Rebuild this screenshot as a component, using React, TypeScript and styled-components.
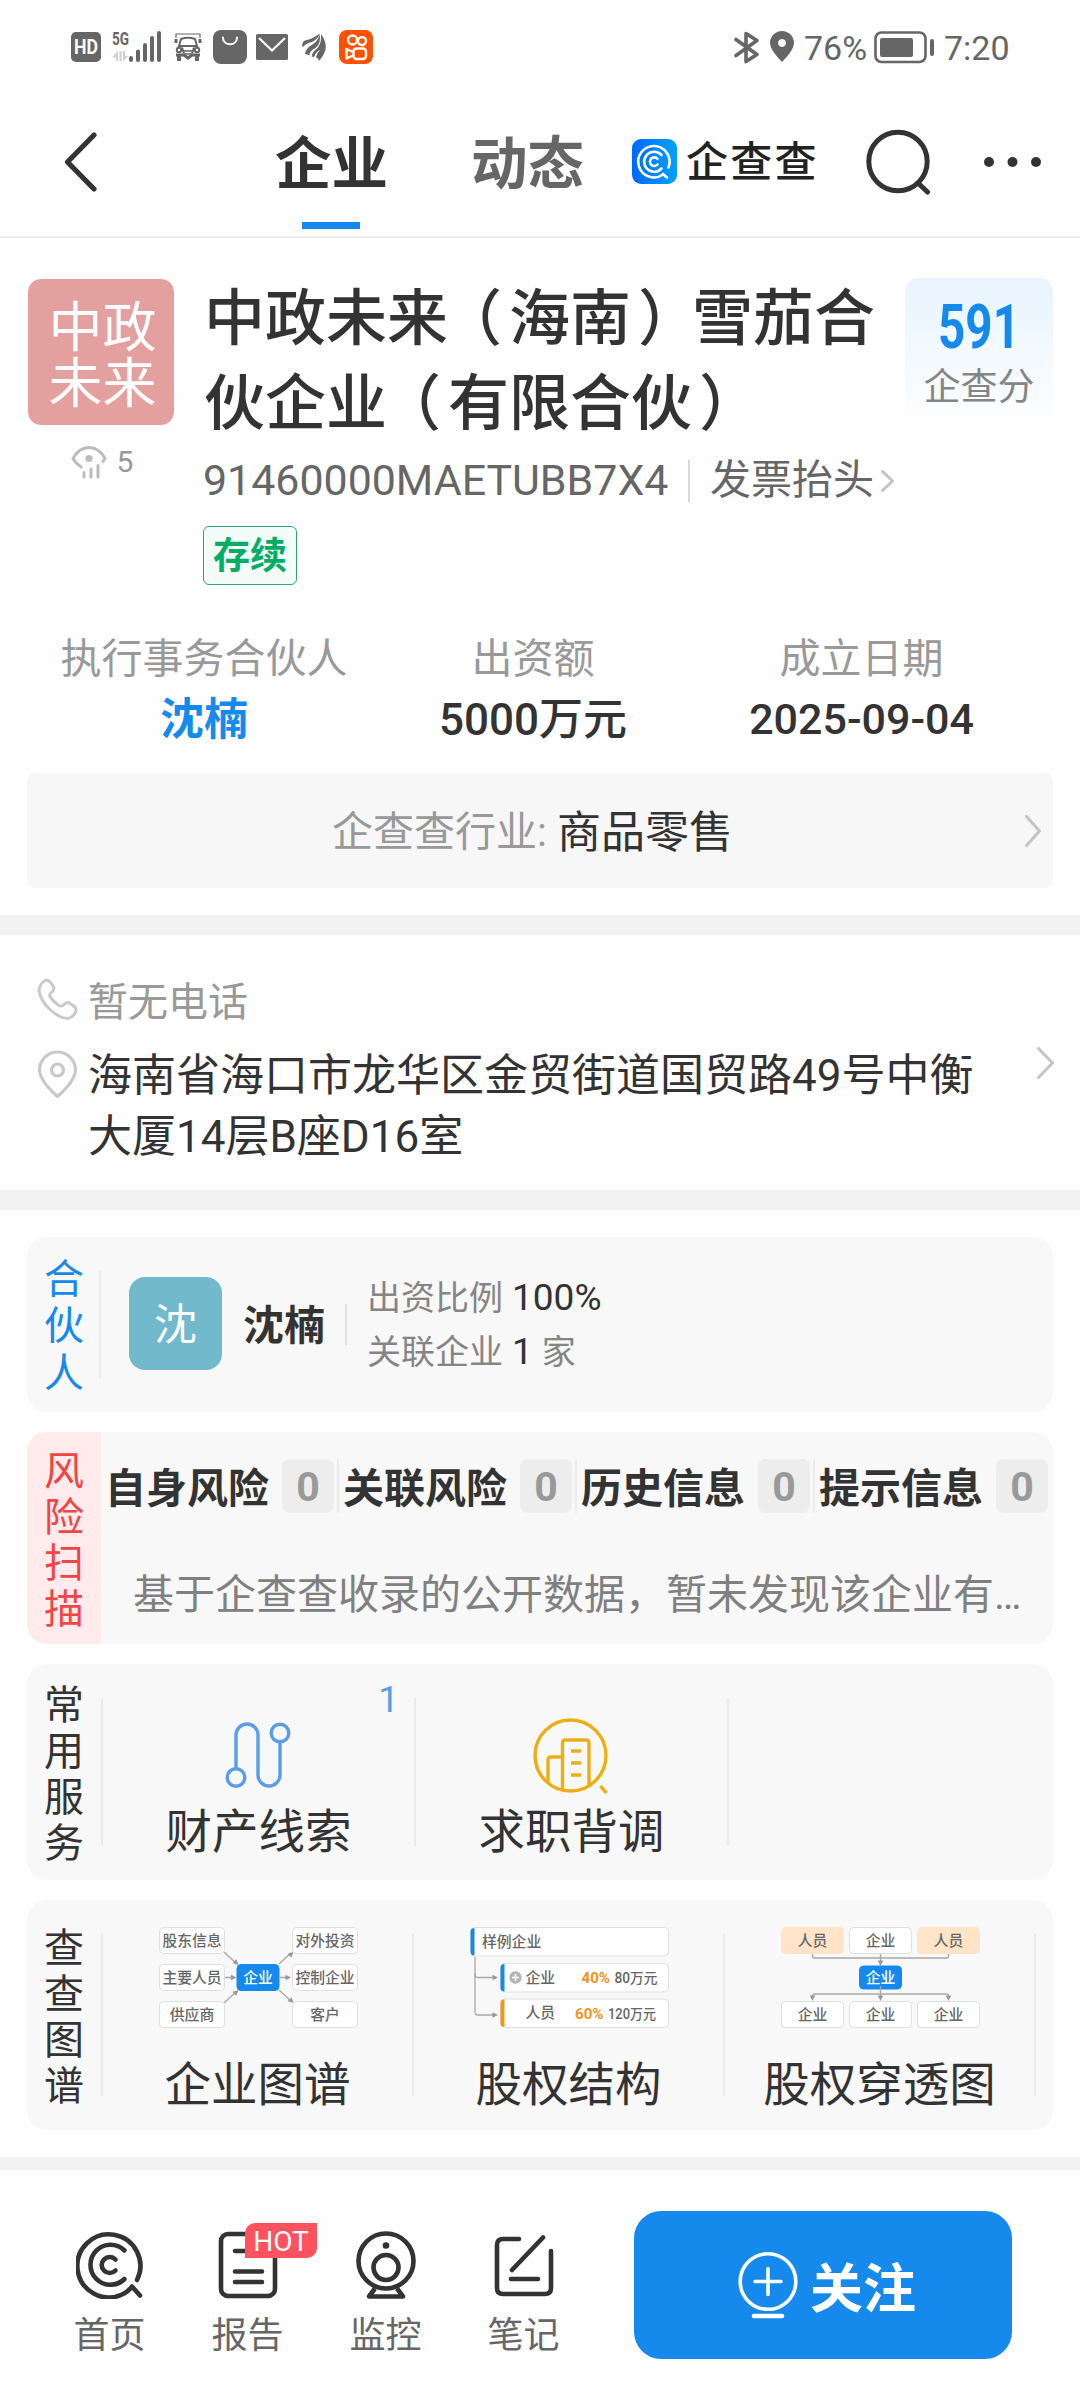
import React from "react";
import styled, { createGlobalStyle } from "styled-components";

const BLUE = "#168aec";
const INK = "#333333";

const GlobalStyle = createGlobalStyle`
  * { box-sizing: border-box; }
  body {
    margin: 0;
    background: #ffffff;
    font-family: Roboto, "Noto Sans CJK SC", sans-serif;
    color: ${INK};
  }
  svg { display: block; flex: none; }
`;

const Page = styled.main`
  width: 1080px;
  height: 2400px;
  overflow: hidden;
  display: flex;
  flex-direction: column;
  background: #fefefe;
`;

/* ---------- status bar ---------- */
const StatusBar = styled.div`
  height: 94px;
  padding: 0 72px 0 71px;
  display: flex;
  align-items: center;
  justify-content: space-between;
  color: #666;
`;
const StatusGroup = styled.div<{ $gap: number }>`
  display: flex;
  align-items: center;
  gap: ${(p) => p.$gap}px;
`;
const StatusText = styled.span<{ $w: number }>`
  width: ${(p) => p.$w}px;
  font-size: 34px;
  line-height: 40px;
  padding-top: 1px;
  white-space: nowrap;
`;

/* ---------- header ---------- */
const Header = styled.header`
  height: 144px;
  padding: 0 39px 7px 64px;
  display: flex;
  align-items: center;
  border-bottom: 2px solid #ececec;
`;
const Tabs = styled.nav`
  display: flex;
  gap: 83px;
  margin-left: 177px;
`;
const Tab = styled.span<{ $active?: boolean }>`
  position: relative;
  font-size: 56.5px;
  font-weight: 700;
  line-height: 142px;
  height: 135px;
  color: ${(p) => (p.$active ? INK : "#666")};
  &::after {
    content: "";
    display: ${(p) => (p.$active ? "block" : "none")};
    position: absolute;
    bottom: 0;
    left: 27px;
    width: 58px;
    height: 7px;
    background: ${BLUE};
  }
`;
const Brand = styled.div`
  margin-left: 48px;
  display: flex;
  align-items: center;
  gap: 9px;
  width: 234px;
`;
const BrandName = styled.span`
  padding-top: 3px;
  font-size: 42px;
  font-weight: 500;
  letter-spacing: 2.2px;
  line-height: 50px;
  white-space: nowrap;
  color: #222;
`;
const HeaderActions = styled.div`
  display: flex;
  align-items: center;
  gap: 53px;
`;

/* ---------- company ---------- */
const Company = styled.section`
  height: 677px;
  padding: 40px 27px 0;
`;
const CompanyTop = styled.div`
  display: flex;
  height: 307px;
`;
const LogoColumn = styled.div`
  width: 148px;
  display: flex;
  flex-direction: column;
  align-items: center;
`;
const CompanyLogo = styled.div`
  width: 148px;
  height: 148px;
  border: 0.5px solid #fefefe;
  border-radius: 14px;
  background: #e49f9f;
  color: #fff;
  font-size: 54px;
  line-height: 55.5px;
  text-align: center;
  padding: 22px 17px 0 20px;
`;
const Views = styled.div`
  display: flex;
  align-items: center;
  gap: 10px;
  margin: 17px 0 0 2px;
  font-size: 30px;
  line-height: 38px;
  color: #999;
`;
const CompanyMain = styled.div`
  width: 702px;
  margin-left: 28px;
`;
const CompanyName = styled.h1`
  margin: -1px 0 0 1px;
  font-size: 61px;
  line-height: 85px;
  font-weight: 500;
`;
/* half-width brackets, padded back to a full em so that they sit centred */
const Open = styled.span`
  font-feature-settings: "halt";
  margin: 0 7px 0 23.5px;
`;
const Close = styled.span`
  font-feature-settings: "halt";
  margin: 0 23.5px 0 7px;
`;
const CodeRow = styled.div`
  display: flex;
  align-items: center;
  margin-top: 10px;
  height: 47px;
  color: #666;
`;
const Code = styled.span`
  width: 485px;
  font-size: 42.9px;
  line-height: 47px;
`;
const Invoice = styled.span`
  display: flex;
  align-items: center;
  gap: 7px;
  height: 42px;
  padding-left: 20px;
  border-left: 2px solid #d8d8d8;
  font-size: 41px;
  line-height: 47px;
`;
const StateTag = styled.span`
  display: block;
  width: 94px;
  height: 59px;
  margin-top: 22px;
  border: 1.5px solid #2ba974;
  border-radius: 6px;
  background: #f4fcf9;
  color: #02ad66;
  font-size: 37px;
  font-weight: 700;
  line-height: 59px;
  text-align: center;
`;
const Score = styled.div`
  width: 148px;
  height: 148px;
  border-radius: 14px;
  background: linear-gradient(#e8f4ff, #fefefe);
  text-align: center;
  padding-top: 19px;
`;
const ScoreValue = styled.div`
  font-size: 61px;
  line-height: 60px;
  font-weight: 700;
  color: ${BLUE};
  transform: scaleX(0.78);
`;
const ScoreLabel = styled.div`
  font-size: 37px;
  line-height: 46px;
  margin-top: 8px;
  color: #858585;
`;
const Facts = styled.dl`
  margin: 49px 0 0;
  display: grid;
  grid-template-columns: 354px 304px 353px;
`;
const Fact = styled.div`
  display: flex;
  flex-direction: column;
  align-items: center;
  gap: 11px;
`;
const FactLabel = styled.dt`
  font-size: 41px;
  line-height: 50px;
  color: #999;
`;
const FactValue = styled.dd<{ $link?: boolean; $tight?: boolean }>`
  margin: ${(p) => (p.$tight ? -1 : 0)}px 0 0;
  font-size: ${(p) => (p.$tight ? 43 : 44)}px;
  line-height: 50px;
  font-weight: ${(p) => (p.$link ? 700 : 500)};
  color: ${(p) => (p.$link ? BLUE : INK)};
`;
const Industry = styled.div`
  display: flex;
  align-items: center;
  height: 115px;
  margin-top: 28px;
  padding: 0 12px 0 305px;
  border-radius: 8px;
  background: #f7f7f7;
`;
const IndustryLabel = styled.span`
  padding-top: 2px;
  font-size: 41px;
  line-height: 60px;
  color: #999;
  margin-right: 10px;
`;
const IndustryName = styled.span`
  padding-top: 4px;
  font-size: 44px;
  line-height: 60px;
`;
const Push = styled.span`
  margin-left: auto;
`;
const Band = styled.div<{ $h: number }>`
  flex: none;
  height: ${(p) => p.$h}px;
  background: #f2f2f2;
`;

/* ---------- contact ---------- */
const Contact = styled.section`
  height: 255px;
  padding: 43px 26px 0 37px;
  display: flex;
`;
const ContactList = styled.div`
  display: flex;
  flex-direction: column;
  gap: 18px;
`;
const ContactRow = styled.div`
  display: flex;
  gap: 10px;
`;
const Phone = styled.span`
  font-size: 40px;
  line-height: 50px;
  color: #999;
`;
const Address = styled.span`
  width: 900px;
  font-size: 44px;
  line-height: 61px;
`;
const ContactArrow = styled.div`
  margin: 69px 0 0 auto;
`;

/* ---------- cards ---------- */
const Cards = styled.section`
  height: 947px;
  padding: 27px 27px 0;
  display: flex;
  flex-direction: column;
  gap: 20px;
`;
const Card = styled.article<{ $h: number }>`
  display: flex;
  flex: none;
  height: ${(p) => p.$h}px;
  border-radius: 20px;
  overflow: hidden;
  background: #f8f8f8;
`;
const SideLabel = styled.div<{ $color?: string; $bg?: string; $line?: number; $pt?: number }>`
  width: 74px;
  flex: none;
  display: flex;
  flex-direction: column;
  align-items: center;
  justify-content: center;
  padding-top: ${(p) => p.$pt ?? 6}px;
  font-size: 40px;
  line-height: ${(p) => p.$line ?? 46}px;
  color: ${(p) => p.$color ?? INK};
  background: ${(p) => p.$bg ?? "transparent"};
`;
const Rule = styled.i<{ $h: number; $c?: string; $ml?: number }>`
  flex: none;
  align-self: center;
  width: 2px;
  height: ${(p) => p.$h}px;
  margin-left: ${(p) => p.$ml ?? 0}px;
  background: ${(p) => p.$c ?? "#ebebeb"};
`;
const Avatar = styled.div`
  align-self: center;
  width: 93px;
  height: 93px;
  margin: -2px 0 0 28px;
  border-radius: 16px;
  background: #72b9cc;
  color: #fff;
  font-size: 43px;
  line-height: 96px;
  text-align: center;
`;
const PartnerName = styled.b`
  align-self: center;
  width: 102px;
  margin: 3px 0 0 21px;
  font-size: 41px;
  line-height: 50px;
  font-weight: 700;
`;
const PartnerFacts = styled.div`
  align-self: center;
  margin: 0 0 0 20px;
  font-size: 34px;
  line-height: 53px;
  color: #858585;
`;
const PartnerFact = styled.div`
  display: flex;
  align-items: baseline;
  gap: 9px;
`;
const Num = styled.span`
  font-size: 37px;
  color: ${INK};
`;
const RiskBody = styled.div`
  flex: 1;
  padding-top: 27px;
`;
const RiskTabs = styled.div`
  display: flex;
`;
const RiskTab = styled.div<{ $last: boolean }>`
  width: 238px;
  height: 54px;
  padding: 0 3px 0 4px;
  display: flex;
  align-items: center;
  justify-content: space-between;
  font-size: 41px;
  line-height: 56px;
  font-weight: 700;
  white-space: nowrap;
  border-right: 2px solid ${(p) => (p.$last ? "transparent" : "#ebebeb")};
`;
const RiskName = styled.span`
  padding-top: 5px;
`;
const RiskCount = styled.span`
  width: 52px;
  height: 54px;
  border-radius: 8px;
  background: #ededed;
  color: #999;
  font-size: 41px;
  text-align: center;
`;
const RiskText = styled.p`
  margin: 55px 0 0 32px;
  font-size: 41px;
  line-height: 54px;
  color: #808080;
  white-space: nowrap;
`;
const Cell = styled.div<{ $w: number; $pad: number; $gap: number }>`
  position: relative;
  width: ${(p) => p.$w}px;
  padding-top: ${(p) => p.$pad}px;
  display: flex;
  flex-direction: column;
  align-items: center;
  gap: ${(p) => p.$gap}px;
`;
const Art = styled.div<{ $shift: number }>`
  padding-left: ${(p) => Math.max(0, p.$shift * 2)}px;
  padding-right: ${(p) => Math.max(0, -p.$shift * 2)}px;
`;
const CellLabel = styled.span`
  font-size: 46.5px;
  line-height: 56px;
  white-space: nowrap;
`;
const CellCount = styled.span`
  position: absolute;
  top: 14px;
  right: 15px;
  font-size: 37px;
  line-height: 44px;
  color: #5a9de8;
`;

/* ---------- bottom bar ---------- */
const BottomBar = styled.footer`
  height: 230px;
  padding: 41px 68px 0 40.5px;
  display: flex;
`;
const NavItem = styled.div`
  position: relative;
  width: 138px;
  padding-top: 20px;
  display: flex;
  flex-direction: column;
  align-items: center;
  gap: 13px;
  font-size: 36px;
  line-height: 48px;
  color: #666;
`;
const Hot = styled.span`
  position: absolute;
  top: 12px;
  left: 66.5px;
  width: 72px;
  height: 35px;
  border-radius: 10px 0 10px 0;
  background: #ff525f;
  color: #fff;
  font-size: 28px;
  line-height: 37px;
  text-align: center;
`;
const Follow = styled.button`
  width: 378px;
  height: 148px;
  margin-left: auto;
  padding: 0 0 0 8px;
  border: 0;
  border-radius: 27px;
  background: ${BLUE};
  color: #fff;
  font: 700 53px/60px Roboto, "Noto Sans CJK SC", sans-serif;
  display: flex;
  align-items: center;
  justify-content: center;
  gap: 12px;
`;
const FollowText = styled.span`
  padding-top: 9px;
`;

/* ---------- icons ---------- */
const Chevron = ({ w = 16, h = 32, s = 3 }: { w?: number; h?: number; s?: number }) => (
  <svg width={w} height={h} fill="none" stroke="#c4c4c4" strokeWidth={s} strokeLinecap="round" strokeLinejoin="round">
    <path d={`M${s / 2} ${s / 2}L${w - s / 2} ${h / 2}L${s / 2} ${h - s / 2}`} />
  </svg>
);

const StatusLeft = () => (
  <svg width="304" height="36" viewBox="71 29 304 36">
    <rect x="71" y="32" width="30" height="30" rx="5" fill="#666" />
    <text x="86" y="54" fontSize="19.5" fontWeight="700" fill="#fff" textAnchor="middle" textLength="24" lengthAdjust="spacingAndGlyphs">HD</text>
    <text x="112" y="45" fontSize="18.5" fontWeight="700" fill="#666" textLength="17" lengthAdjust="spacingAndGlyphs">5G</text>
    <path d="M112 57.500L118 50.500V61H116V57.500ZM119.500 51h2v10h-2zM123 51h2v5h3l-5 5.500z" fill="#cfcfcf" />
    <g stroke="#666" strokeWidth="4" strokeLinecap="round">
      <path d="M131 58v2M138 51.500v8.500M145 45v15M152 38v22M159 33v27" />
    </g>
    <g fill="none" stroke="#666" strokeWidth="2">
      <path d="M176 38v-4h24v4" strokeWidth="1.200" />
      <path d="M179 46l2-7q7-2.500 14 0l2 7z" />
      <path d="M176 39v4M200 39v4" strokeWidth="3" />
      <path d="M183 51h10M184 54h8" strokeWidth="1.500" />
      <circle cx="179" cy="50" r="2.200" />
      <circle cx="197" cy="50" r="2.200" />
      <path d="M176 55h8l4 3 4-3h8" strokeWidth="3" />
      <path d="M179 56v5M197 56v5" strokeWidth="4" />
      <path d="M182 47.500l2 6M194 47.500l-2 6" />
    </g>
    <rect x="213" y="30" width="34" height="34" rx="8" fill="#666" />
    <path d="M223 37.500c0 9 14 9 14 0" stroke="#fff" strokeWidth="2" fill="none" strokeLinecap="round" />
    <rect x="256" y="34" width="32" height="26" rx="1.500" fill="#666" />
    <path d="M259 38l13 12.500L285 38" stroke="#fff" strokeWidth="2.200" fill="none" />
    <g fill="#666">
      <path d="M302.500 47.500Q301.500 42 305 40.500Q313 39 319.500 33.500Q318.500 39 312 42Q306 43 302.500 47.500Z" />
      <path d="M305 54Q306 48 311 45.500Q318 42 319.500 34Q321.500 43 315.500 48Q309 51 309.500 55.500Q307 54 305 54Z" />
      <path d="M311.500 56.500Q313 51 317 48.500Q322 43 321 34Q327 42 325.500 50Q323.500 56 319 61Q318 57 316 58Q317 52 320.500 50Q316 51 314 57Z" />
    </g>
    <rect x="339" y="30" width="34" height="34" rx="8" fill="#ff5000" />
    <g fill="none" stroke="#fff" strokeWidth="2.400">
      <circle cx="352.500" cy="40" r="4.500" />
      <circle cx="362" cy="41" r="4" />
      <rect x="353.500" y="48.500" width="12.500" height="10.500" rx="3" />
      <path d="M353 52l-6.500-3v9.500l6.500-3" strokeLinejoin="round" />
    </g>
  </svg>
);

const Bluetooth = () => (
  <svg width="25" height="33" fill="none" stroke="#666" strokeWidth="3.600" strokeLinejoin="round" strokeLinecap="round">
    <path d="M2 8.500L23 23.500L12 30.500V2.500L23 9.500L2 24.500" />
  </svg>
);
const SolidPin = () => (
  <svg width="24" height="32">
    <path fillRule="evenodd" fill="#666" d="M12 0a12 12 0 0 1 12 12q0 7-12 19Q0 19 0 12A12 12 0 0 1 12 0zM12 8a4 4 0 1 0 .01 0z" />
  </svg>
);
const Battery = () => (
  <svg width="60" height="33">
    <rect x="1.500" y="1.500" width="50" height="29.500" rx="6" fill="none" stroke="#666" strokeWidth="2.600" />
    <rect x="6" y="7" width="33" height="19" rx="2" fill="#666" />
    <rect x="56" y="8" width="4" height="17" rx="2" fill="#666" />
  </svg>
);
const Back = () => (
  <svg width="34" height="62" fill="none" stroke="#333" strokeWidth="5.200" strokeLinecap="round" strokeLinejoin="round">
    <path d="M30 4L3.500 31L30 58" />
  </svg>
);
const BrandMark = () => (
  <svg width="45" height="45">
    <defs>
      <linearGradient id="brand" x1="0" y1="0" x2="1" y2="0">
        <stop offset="0" stopColor="#0069ff" />
        <stop offset="1" stopColor="#00a2ff" />
      </linearGradient>
    </defs>
    <rect width="45" height="45" rx="9" fill="url(#brand)" />
    <g fill="none" stroke="#fff" strokeWidth="2.600" strokeLinecap="round">
      <path d="M36.500 28.500A15.700 15.700 0 1 0 31 35.500M31 35l4 3.500" />
      <path d="M29.500 16A10 10 0 1 0 29.500 29.500" />
      <path d="M25.500 19.800A4.300 4.300 0 1 0 25.500 25.500" />
    </g>
  </svg>
);
const Search = () => (
  <svg width="65" height="66" fill="none" stroke="#333" strokeWidth="5" strokeLinecap="round">
    <circle cx="32" cy="32.500" r="29.200" />
    <path d="M52 54L61.500 63" />
  </svg>
);
const Dots = () => (
  <svg width="57" height="12" fill="#333">
    <circle cx="5" cy="6" r="5" />
    <circle cx="28.500" cy="6" r="5" />
    <circle cx="52" cy="6" r="5" />
  </svg>
);
const EyeStats = () => (
  <svg width="36" height="34" fill="none" stroke="#bcbcbc" strokeWidth="3" strokeLinecap="round" strokeLinejoin="round">
    <path d="M10 22Q5 19 2 13.500Q8 2.500 18 2.500T34 13.500L32 16.500" />
    <circle cx="18" cy="13.500" r="3.600" fill="#bcbcbc" stroke="none" />
    <path d="M13 27.500v4.500M20 24v8M27 20.500v11.500" />
  </svg>
);
const PhoneIcon = () => (
  <svg width="41" height="50" viewBox="0 0 41 50" fill="none" stroke="#c9c9c9" strokeWidth="3" strokeLinejoin="round">
    <path d="M9 2Q3 5 2 12Q3 22 13 31.500Q22 40 31 40.500Q37 39 39 33Q39.500 30 36 27.500L31.500 24.500Q29 24 27 26.500Q25 29 22 27.500Q15 22.500 12.500 17.500Q13 15 15.500 13.500Q17.500 11.500 16.500 9Q13 2 9 2Z" />
  </svg>
);
const PinIcon = () => (
  <svg width="41" height="55" viewBox="0 -4 41 55" fill="none" stroke="#c9c9c9" strokeWidth="3.200" strokeLinejoin="round">
    <path d="M20.500 2A18 18 0 0 1 38.500 20Q38 31 20.500 46.500Q3 31 2.500 20A18 18 0 0 1 20.500 2Z" />
    <circle cx="20.500" cy="20" r="6" />
  </svg>
);
const RouteIcon = () => (
  <svg width="66" height="68" fill="none" stroke="#5a9de8" strokeWidth="3.400">
    <circle cx="11" cy="56.500" r="8.800" />
    <circle cx="55" cy="12" r="8.800" />
    <path d="M11 47.500V14A11 11 0 0 1 33 14V54A11 11 0 0 0 55 54V21" />
  </svg>
);
const InspectIcon = () => (
  <svg width="76" height="76" fill="none" stroke="#edae14" strokeWidth="3.400">
    <circle cx="37.500" cy="37.500" r="35.500" />
    <path d="M29.500 72V25q0-3 3-3H53q3 0 3 3V67M15 64V42q0-3 3-3H29" />
    <path d="M38 33h10M38 45h10M38 57h10M67.500 68l6 7" />
  </svg>
);
const HomeIcon = () => (
  <svg width="68" height="68" fill="none" stroke="#333" strokeWidth="4.600" strokeLinecap="round">
    <path d="M61 49A31.500 31.500 0 1 0 46 63.500Q52 61 56 55.500L64 64.500" strokeLinejoin="round" />
    <path d="M48.500 19.500A20 20 0 1 0 48.500 48" />
    <path d="M39.500 28.500A8 8 0 1 0 39.500 39.500" />
  </svg>
);
const ReportIcon = () => (
  <svg width="60" height="68" fill="none" stroke="#333" strokeWidth="4.600" strokeLinecap="round">
    <rect x="3" y="3" width="54" height="62" rx="7" />
    <path d="M17 20h18M17 40.500h27M17 51h27" />
  </svg>
);
const MonitorIcon = () => (
  <svg width="60" height="68" fill="none" stroke="#333" strokeWidth="4.600" strokeLinejoin="round">
    <circle cx="30" cy="30" r="27.500" />
    <circle cx="30" cy="36.500" r="12.500" />
    <circle cx="30" cy="14.500" r="3.300" fill="#333" stroke="none" />
    <path d="M19 57.500L13 65.500H47L41 57.500" />
  </svg>
);
const NoteIcon = () => (
  <svg width="60" height="68" fill="none" stroke="#333" strokeWidth="4.600" strokeLinecap="round">
    <path d="M25 8H9Q3 8 3 14V57Q3 63 9 63H51Q57 63 57 57V20M17 48H44M18 39L49 6.500" />
  </svg>
);
const FollowIcon = () => (
  <svg width="60" height="68" fill="none" stroke="#fff" strokeWidth="3.600" strokeLinecap="round">
    <circle cx="30" cy="30.500" r="27.800" />
    <path d="M30 17.500V43.500M17 30.500H43" />
    <path d="M16 65H44" strokeWidth="4.600" />
  </svg>
);

/* ---------- diagram thumbnails ---------- */
const Arrow = ({ d, x, y, r }: { d: string; x: number; y: number; r: number }) => (
  <g>
    <path d={d} fill="none" stroke="#a8a8a8" strokeWidth="1.300" />
    <path d="M0 0L-5.500 -2.800V2.800Z" fill="#999" transform={`translate(${x} ${y}) rotate(${r})`} />
  </g>
);
type NodeProps = { x: number; y: number; w: number; h: number; label: string; kind?: "blue" | "peach" };
const Node = ({ x, y, w, h, label, kind }: NodeProps) => (
  <g>
    <rect
      x={x + 0.5}
      y={y + 0.5}
      width={w - 1}
      height={h - 1}
      rx="4"
      fill={kind === "blue" ? BLUE : kind === "peach" ? "#ffe4c8" : "#fff"}
      stroke={kind === "blue" ? BLUE : kind === "peach" ? "#ffe4c8" : "#dfdfdf"}
    />
    <text x={x + w / 2} y={y + h / 2 + 5.2} fontSize="14.800" fontWeight="500" textAnchor="middle" fill={kind === "blue" ? "#fff" : "#666"}>
      {label}
    </text>
  </g>
);
const MapThumb = () => (
  <svg width="199" height="101">
    <Arrow d="M65 25L77 36" x={79.5} y={38} r={43} />
    <Arrow d="M66 50.500H74" x={77.500} y={50.500} r={0} />
    <Arrow d="M65 76L77 65" x={79.500} y={63} r={-43} />
    <Arrow d="M120 37L132 26" x={134.500} y={25} r={-43} />
    <Arrow d="M121 50.500H128" x={132} y={50.500} r={0} />
    <Arrow d="M120 63L132 74" x={134.500} y={76} r={43} />
    <Node x={0} y={0} w={66} h={27} label="股东信息" />
    <Node x={0} y={37} w={66} h={27} label="主要人员" />
    <Node x={0} y={74} w={66} h={27} label="供应商" />
    <Node x={133} y={0} w={66} h={27} label="对外投资" />
    <Node x={133} y={37} w={66} h={27} label="控制企业" />
    <Node x={133} y={74} w={66} h={27} label="客户" />
    <Node x={77.500} y={37} w={43} h={27} label="企业" kind="blue" />
  </svg>
);
const ShareThumb = () => (
  <svg width="199" height="101" fill="#666" fontSize="14.800" fontWeight="500">
    <Arrow d="M5 30V47Q5 50.500 8 50.500H24" x={28} y={50.500} r={0} />
    <Arrow d="M5 46V85Q5 88 8 88H24" x={28} y={88} r={0} />
    {[
      { x: 0, y: 0, c: BLUE },
      { x: 30, y: 36, c: BLUE },
      { x: 30, y: 71.5, c: "#f29423" },
    ].map((b) => (
      <g key={b.y}>
        <rect x={b.x + 0.5} y={b.y + 0.5} width={198 - b.x} height="28.500" rx="4" fill="#fff" stroke="#dfdfdf" />
        <path d={`M${b.x + 4.500} ${b.y + 1}v27.500q-4 0-4-4v-19.500q0-4 4-4z`} fill={b.c} />
      </g>
    ))}
    <text x="12" y="20">样例企业</text>
    <circle cx="45.500" cy="50.500" r="6.200" fill="#b5b5b5" />
    <path d="M42 50.500h7M45.500 47v7" stroke="#fff" strokeWidth="1.600" />
    <text x="55.500" y="55.700">企业</text>
    <text x="55.500" y="91.200">人员</text>
    <g fontSize="13.800" fontWeight="500">
      <text x="111.500" y="56" fill="#f29423" fontWeight="700" textLength="28.500" lengthAdjust="spacingAndGlyphs">40%</text>
      <text x="144.500" y="56" textLength="43" lengthAdjust="spacingAndGlyphs">80万元</text>
      <text x="105" y="91.500" fill="#f29423" fontWeight="700" textLength="28.500" lengthAdjust="spacingAndGlyphs">60%</text>
      <text x="138" y="91.500" textLength="48" lengthAdjust="spacingAndGlyphs">120万元</text>
    </g>
  </svg>
);
const PenetrateThumb = () => (
  <svg width="199" height="101">
    <path d="M31.500 27v2q0 2 2 2H165.500q2 0 2-2v-2" fill="none" stroke="#a8a8a8" strokeWidth="1.300" />
    <Arrow d="M99.500 27V35" x={99.500} y={39} r={90} />
    <Node x={0} y={0} w={63} h={27} label="人员" kind="peach" />
    <Node x={68} y={0} w={63} h={27} label="企业" />
    <Node x={136} y={0} w={63} h={27} label="人员" kind="peach" />
    <Node x={78} y={38.500} w={43} h={24} label="企业" kind="blue" />
    <Arrow d="M99.500 59V70" x={99.500} y={74} r={90} />
    <Arrow d="M99.500 67H33.500q-2 0-2 2v2" x={31.500} y={74} r={90} />
    <Arrow d="M99.500 67H165.500q2 0 2 2v2" x={167.500} y={74} r={90} />
    <Node x={0} y={74} w={63} h={27} label="企业" />
    <Node x={68} y={74} w={63} h={27} label="企业" />
    <Node x={136} y={74} w={63} h={27} label="企业" />
  </svg>
);

const Vertical = ({ text }: { text: string }) => (
  <>
    {[...text].map((c, i) => (
      <span key={i}>{c}</span>
    ))}
  </>
);

const risks = ["自身风险", "关联风险", "历史信息", "提示信息"];
const charts = [
  { label: "企业图谱", art: <MapThumb /> },
  { label: "股权结构", art: <ShareThumb /> },
  { label: "股权穿透图", art: <PenetrateThumb /> },
];
const navItems = [
  { label: "首页", icon: <HomeIcon /> },
  { label: "报告", icon: <ReportIcon />, hot: true },
  { label: "监控", icon: <MonitorIcon /> },
  { label: "笔记", icon: <NoteIcon /> },
];

export default function App() {
  return (
    <Page>
      <GlobalStyle />
      <StatusBar>
        <StatusLeft />
        <StatusGroup $gap={10.5}>
          <Bluetooth />
          <SolidPin />
          <StatusText $w={59}>76%</StatusText>
          <Battery />
          <StatusText $w={64}>7:20</StatusText>
        </StatusGroup>
      </StatusBar>

      <Header>
        <Back />
        <Tabs>
          <Tab $active>企业</Tab>
          <Tab>动态</Tab>
        </Tabs>
        <Brand>
          <BrandMark />
          <BrandName>企查查</BrandName>
        </Brand>
        <HeaderActions>
          <Search />
          <Dots />
        </HeaderActions>
      </Header>

      <Company>
        <CompanyTop>
          <LogoColumn>
            <CompanyLogo>中政未来</CompanyLogo>
            <Views>
              <EyeStats />5
            </Views>
          </LogoColumn>
          <CompanyMain>
            <CompanyName>
              中政未来<Open>（</Open>海南<Close>）</Close>雪茄合伙企业<Open>（</Open>有限合伙<Close>）</Close>
            </CompanyName>
            <CodeRow>
              <Code>91460000MAETUBB7X4</Code>
              <Invoice>
                发票抬头
                <Chevron w={13} h={22} />
              </Invoice>
            </CodeRow>
            <StateTag>存续</StateTag>
          </CompanyMain>
          <Score>
            <ScoreValue>591</ScoreValue>
            <ScoreLabel>企查分</ScoreLabel>
          </Score>
        </CompanyTop>
        <Facts>
          <Fact>
            <FactLabel>执行事务合伙人</FactLabel>
            <FactValue $link>沈楠</FactValue>
          </Fact>
          <Fact>
            <FactLabel>出资额</FactLabel>
            <FactValue>5000万元</FactValue>
          </Fact>
          <Fact>
            <FactLabel>成立日期</FactLabel>
            <FactValue $tight>2025-09-04</FactValue>
          </Fact>
        </Facts>
        <Industry>
          <IndustryLabel>企查查行业:</IndustryLabel>
          <IndustryName>商品零售</IndustryName>
          <Push>
            <Chevron />
          </Push>
        </Industry>
      </Company>

      <Band $h={20} />
      <Contact>
        <ContactList>
          <ContactRow>
            <PhoneIcon />
            <Phone>暂无电话</Phone>
          </ContactRow>
          <ContactRow>
            <PinIcon />
            <Address>海南省海口市龙华区金贸街道国贸路49号中衡大厦14层B座D16室</Address>
          </ContactRow>
        </ContactList>
        <ContactArrow>
          <Chevron w={17} />
        </ContactArrow>
      </Contact>
      <Band $h={20} />

      <Cards>
        <Card $h={175}>
          <SideLabel $color={BLUE} $line={47} $pt={4}>
            <Vertical text="合伙人" />
          </SideLabel>
          <Rule $h={107} $ml={-2} />
          <Avatar>沈</Avatar>
          <PartnerName>沈楠</PartnerName>
          <Rule $h={41} $c="#e0e0e0" />
          <PartnerFacts>
            <PartnerFact>
              出资比例 <Num>100%</Num>
            </PartnerFact>
            <PartnerFact>
              关联企业 <Num>1</Num> 家
            </PartnerFact>
          </PartnerFacts>
        </Card>

        <Card $h={212}>
          <SideLabel $color="#f04545" $bg="#ffebeb">
            <Vertical text="风险扫描" />
          </SideLabel>
          <RiskBody>
            <RiskTabs>
              {risks.map((r, i) => (
                <RiskTab key={r} $last={i === risks.length - 1}>
                  <RiskName>{r}</RiskName>
                  <RiskCount>0</RiskCount>
                </RiskTab>
              ))}
            </RiskTabs>
            <RiskText>基于企查查收录的公开数据，暂未发现该企业有…</RiskText>
          </RiskBody>
        </Card>

        <Card $h={216}>
          <SideLabel>
            <Vertical text="常用服务" />
          </SideLabel>
          <Rule $h={148} />
          <Cell $w={311} $pad={57} $gap={15}>
            <Art $shift={-1}>
              <RouteIcon />
            </Art>
            <CellLabel>财产线索</CellLabel>
            <CellCount>1</CellCount>
          </Cell>
          <Rule $h={148} />
          <Cell $w={311} $pad={54} $gap={10}>
            <Art $shift={-1}>
              <InspectIcon />
            </Art>
            <CellLabel>求职背调</CellLabel>
          </Cell>
          <Rule $h={148} />
        </Card>

        <Card $h={230}>
          <SideLabel>
            <Vertical text="查查图谱" />
          </SideLabel>
          <Rule $h={162} />
          {charts.map((c) => (
            <React.Fragment key={c.label}>
              <Cell $w={309} $pad={27} $gap={29}>
                <Art $shift={1}>{c.art}</Art>
                <CellLabel>{c.label}</CellLabel>
              </Cell>
              <Rule $h={162} />
            </React.Fragment>
          ))}
        </Card>
      </Cards>

      <Band $h={13} />
      <BottomBar>
        {navItems.map((n) => (
          <NavItem key={n.label}>
            {n.icon}
            {n.label}
            {n.hot && <Hot>HOT</Hot>}
          </NavItem>
        ))}
        <Follow>
          <FollowIcon />
          <FollowText>关注</FollowText>
        </Follow>
      </BottomBar>
    </Page>
  );
}
